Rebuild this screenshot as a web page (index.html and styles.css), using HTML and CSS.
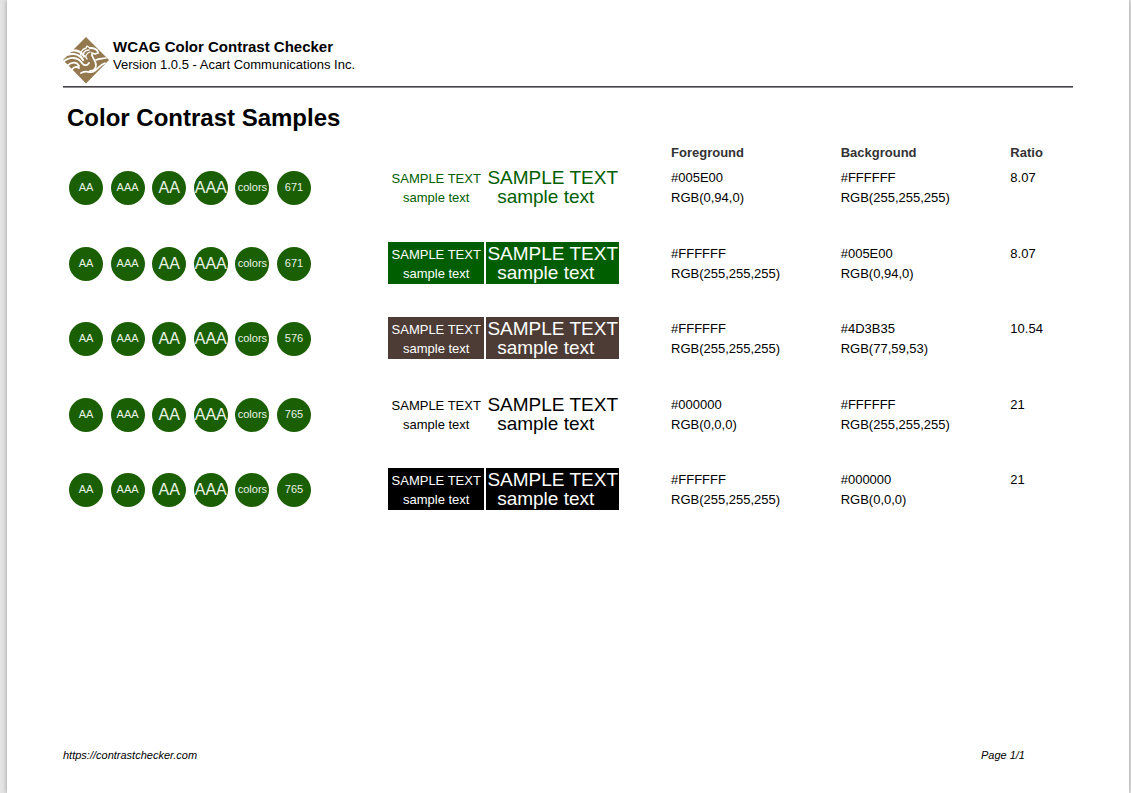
FILE: index.html
```html
<!DOCTYPE html>
<html lang="en">
<head>
<meta charset="utf-8">
<title>WCAG Color Contrast Checker</title>
<link rel="stylesheet" href="styles.css">
</head>
<body>
<div class="sheet">
  <header class="masthead">
    <svg class="logo" viewBox="0 0 46 48" aria-hidden="true">
      <path fill="#94794f" d="M23 1 46 24 23 47.500 0 24Z"/>
      <g fill="none" stroke="#fff" stroke-linecap="round" stroke-linejoin="round">
        <path stroke-width="2.200" d="M4 16C10 13 17 14 21 20M-1 21C7 16 16 17 20 24"/>
        <path stroke-width="1.800" d="M0 26C7 20 15 21 19 27C21 30 24 30 26 27M4 30C9 25 14 26 16 30M8 35C10 31 13 30 16 32"/>
        <path stroke-width="1.800" d="M29 18C28 21 33 24 33 29C33 33 30 35 27 35M35 17L32 18L29 17M35 16C34 13 31 12 27 12"/>
        <path stroke-width="1.300" d="M19 22C16 17 19 13 23 12L24 10L27 12M21 21C19 17 22 14 26 14M24 23C21 20 24 17 27 16"/>
        <path stroke-width="1.700" d="M33 24C36 22 39 23 43 22M18 37C24 34 25 37 29 36C34 35 36 29 42 27"/>
      </g>
    </svg>
    <div>
      <div class="product">WCAG Color Contrast Checker</div>
      <div class="version">Version 1.0.5 - Acart Communications Inc.</div>
    </div>
  </header>
  <main>
    <h1 class="title">Color Contrast Samples</h1>
    <table class="samples">
      <colgroup><col class="col-badges"><col class="col-sample"><col class="col-color"><col class="col-color"><col class="col-ratio"></colgroup>
      <thead>
        <tr><td></td><td></td><th scope="col">Foreground</th><th scope="col">Background</th><th scope="col">Ratio</th></tr>
      </thead>
      <tbody>
        <tr>
          <td><div class="badges"><span class="badge">AA</span><span class="badge">AAA</span><span class="badge big">AA</span><span class="badge big">AAA</span><span class="badge">colors</span><span class="badge">671</span></div></td>
          <td><div class="swatches green-on-white"><div class="swatch">SAMPLE TEXT<br>sample text</div><div class="swatch large">SAMPLE TEXT<div class="lower">sample text</div></div></div></td>
          <td class="value">#005E00<br>RGB(0,94,0)</td><td class="value">#FFFFFF<br>RGB(255,255,255)</td><td class="value">8.07</td>
        </tr>
        <tr>
          <td><div class="badges"><span class="badge">AA</span><span class="badge">AAA</span><span class="badge big">AA</span><span class="badge big">AAA</span><span class="badge">colors</span><span class="badge">671</span></div></td>
          <td><div class="swatches white-on-green"><div class="swatch">SAMPLE TEXT<br>sample text</div><div class="swatch large">SAMPLE TEXT<div class="lower">sample text</div></div></div></td>
          <td class="value">#FFFFFF<br>RGB(255,255,255)</td><td class="value">#005E00<br>RGB(0,94,0)</td><td class="value">8.07</td>
        </tr>
        <tr>
          <td><div class="badges"><span class="badge">AA</span><span class="badge">AAA</span><span class="badge big">AA</span><span class="badge big">AAA</span><span class="badge">colors</span><span class="badge">576</span></div></td>
          <td><div class="swatches white-on-brown"><div class="swatch">SAMPLE TEXT<br>sample text</div><div class="swatch large">SAMPLE TEXT<div class="lower">sample text</div></div></div></td>
          <td class="value">#FFFFFF<br>RGB(255,255,255)</td><td class="value">#4D3B35<br>RGB(77,59,53)</td><td class="value">10.54</td>
        </tr>
        <tr>
          <td><div class="badges"><span class="badge">AA</span><span class="badge">AAA</span><span class="badge big">AA</span><span class="badge big">AAA</span><span class="badge">colors</span><span class="badge">765</span></div></td>
          <td><div class="swatches black-on-white"><div class="swatch">SAMPLE TEXT<br>sample text</div><div class="swatch large">SAMPLE TEXT<div class="lower">sample text</div></div></div></td>
          <td class="value">#000000<br>RGB(0,0,0)</td><td class="value">#FFFFFF<br>RGB(255,255,255)</td><td class="value">21</td>
        </tr>
        <tr>
          <td><div class="badges"><span class="badge">AA</span><span class="badge">AAA</span><span class="badge big">AA</span><span class="badge big">AAA</span><span class="badge">colors</span><span class="badge">765</span></div></td>
          <td><div class="swatches white-on-black"><div class="swatch">SAMPLE TEXT<br>sample text</div><div class="swatch large">SAMPLE TEXT<div class="lower">sample text</div></div></div></td>
          <td class="value">#FFFFFF<br>RGB(255,255,255)</td><td class="value">#000000<br>RGB(0,0,0)</td><td class="value">21</td>
        </tr>
      </tbody>
    </table>
  </main>
  <footer class="footer"><a href="https://contrastchecker.com">https://contrastchecker.com</a><span>Page 1/1</span></footer>
</div>
</body>
</html>
```

FILE: styles.css
```css
* { box-sizing: border-box; }
body {
  margin: 0;
  padding: 0 2px 0 7px;
  background: #e4e4e4;
  color: #000;
  font: 13px/20px "Liberation Sans", Arial, sans-serif;
}
.sheet {
  display: flex;
  flex-direction: column;
  min-height: 100vh;
  padding: 36px 56px 28px;
  background: #fff;
  box-shadow: 0 0 5px #999;
}
.masthead {
  display: flex;
  gap: 4px;
  padding-bottom: 2px;
  border-bottom: 1px solid #454347;
  box-shadow: 0 1px #8c8a8d;
}
.logo { width: 46px; height: 48px; }
.product { padding-top: 2px; font-size: 15px; line-height: 18px; font-weight: bold; }
.version { line-height: 17px; }
.title { margin: 15px 0 0 4px; font-size: 24px; line-height: 32px; }
.samples {
  width: 100%;
  height: 401px;
  margin-top: 9px;
  table-layout: fixed;
  border-collapse: collapse;
}
.col-badges { width: 32.2%; }
.col-sample { width: 28%; }
.col-color { width: 16.8%; }
.col-ratio { width: 6.2%; }
.samples th, .samples td { padding: 0; text-align: left; vertical-align: top; }
.samples thead tr { height: 23px; }
.samples th { color: #333; }
.samples tbody tr { height: 75px; }
.samples td.value { padding-top: 2px; white-space: nowrap; }
.badges {
  display: flex;
  justify-content: space-between;
  max-width: 248px;
  padding: 5px 0 0 6px;
}
.badge {
  display: flex;
  justify-content: center;
  width: 34px;
  height: 34px;
  border-radius: 50%;
  background: #1b5f04;
  color: #e9f3e6;
  font-size: 11px;
  line-height: 33px;
}
.badge.big { font-size: 16px; }
.swatches { display: flex; gap: 2px; }
.swatch {
  width: 96px;
  height: 42px;
  padding-top: 3px;
  text-align: center;
  line-height: 19px;
  white-space: nowrap;
}
.swatch.large { width: 133px; padding-top: 2px; font-size: 19px; }
.lower { padding-right: 14px; }
.green-on-white { color: #005e00; }
.white-on-green .swatch { background: #005e00; color: #fff; }
.white-on-brown .swatch { background: #4d3b35; color: #fff; }
.white-on-black .swatch { background: #000; color: #fff; }
.footer {
  display: flex;
  justify-content: space-between;
  margin-top: auto;
  padding-right: 48px;
  font-size: 11px;
  font-style: italic;
}
.footer a { color: inherit; text-decoration: none; }
```
